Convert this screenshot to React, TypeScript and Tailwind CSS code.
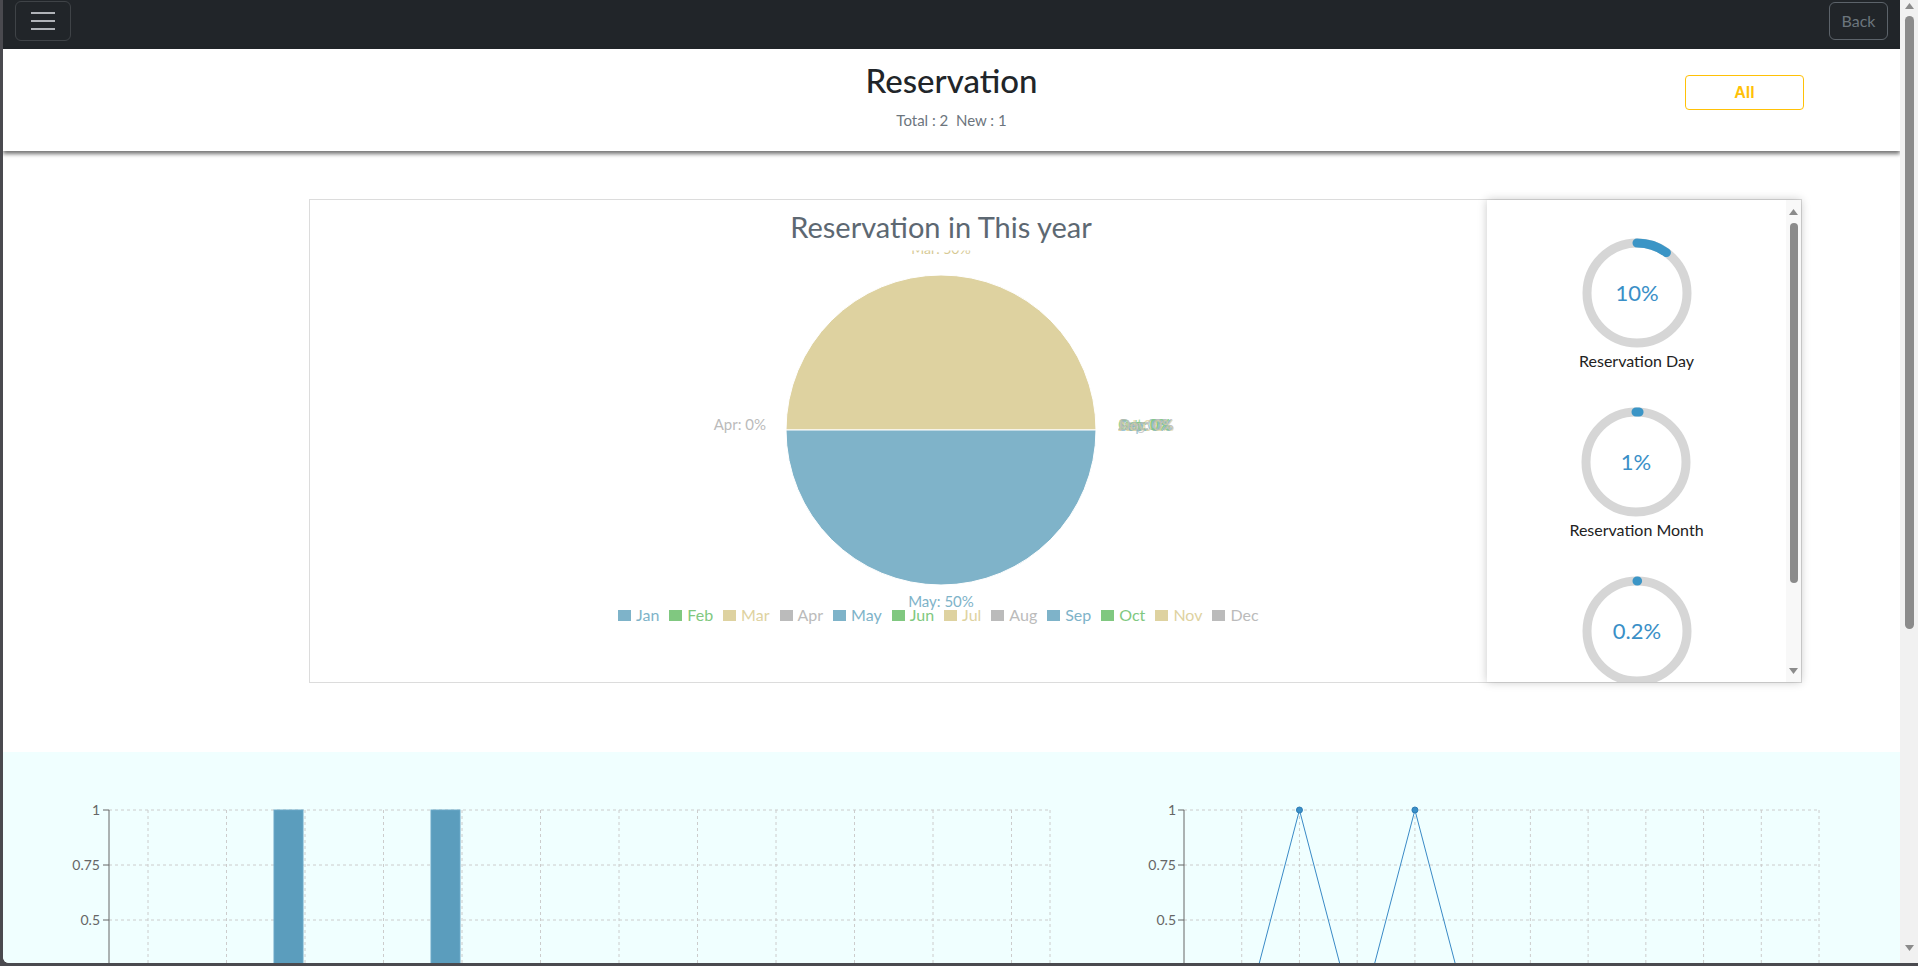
import React from "react";

const MONTHS = ["Jan", "Feb", "Mar", "Apr", "May", "Jun", "Jul", "Aug", "Sep", "Oct", "Nov", "Dec"];
const SLICE_COLORS = ["#7eb3c9", "#80c880", "#ded2a0", "#bbbbbb"];

// values per month for the two bottom charts
const monthly = [0, 0, 1, 0, 1, 0, 0, 0, 0, 0, 0, 0];
const yTicks = [1, 0.75, 0.5, 0.25, 0];
const yOf = (v: number) => 278 - 220 * v;

function Gauge({ percent, label }: { percent: number; label: string }) {
  const r = 50;
  const circ = 2 * Math.PI * r;
  return (
    <div className="flex flex-col items-center">
      <svg width="110" height="110" viewBox="0 0 110 110">
        <circle cx="55" cy="55" r={r} fill="none" stroke="#d6d6d6" strokeWidth="9" />
        <circle
          cx="55"
          cy="55"
          r={r}
          fill="none"
          stroke="#3b95c6"
          strokeWidth="9"
          strokeLinecap="round"
          strokeDasharray={`${(circ * percent) / 100} ${circ}`}
          transform="rotate(-90 55 55)"
        />
        <text x="55" y="63" textAnchor="middle" fontSize="22" fill="#3a8fc7" fontFamily="Lato, sans-serif">
          {percent}%
        </text>
      </svg>
      <div className="mt-[3px] text-[16px] leading-[20px] text-[#222]">{label}</div>
    </div>
  );
}

function PieChart() {
  const cx = 631;
  return (
    <svg width="1177" height="407" className="overflow-visible" style={{ fontFamily: "Lato, sans-serif" }}>
      {/* label half hidden by the title box */}
      <text x={cx} y="54" textAnchor="middle" fontSize="14" fill="#d6c993">
        Mar: 50%
      </text>
      <rect x={cx - 155} y="0" width="310" height="50.5" fill="#ffffff" />
      <text x={cx} y="38" textAnchor="middle" fontSize="29" fill="#5d6872">
        Reservation in This year
      </text>

      <path d={`M ${cx - 155} 230 A 155 155 0 0 1 ${cx + 155} 230 Z`} fill="#ded2a0" stroke="#ffffff" strokeWidth="1" />
      <path d={`M ${cx - 155} 230 A 155 155 0 0 0 ${cx + 155} 230 Z`} fill="#7fb3c9" stroke="#ffffff" strokeWidth="1" />

      <text x={cx - 175} y="230" textAnchor="end" fontSize="15" fill="#bbbbbb">
        Apr: 0%
      </text>
      {["Jan", "Feb", "Jun", "Jul", "Aug", "Sep", "Oct", "Nov", "Dec"].map((m, i) => (
        <text
          key={m}
          x={cx + 177 + (i % 3) * 0.6}
          y={230 + (i % 2) * 0.5}
          fontSize="15"
          fill={SLICE_COLORS[MONTHS.indexOf(m) % 4]}
          opacity="0.75"
        >
          {m}: 0%
        </text>
      ))}

      <text x={cx} y="407" textAnchor="middle" fontSize="15" fill="#7eb3c9">
        May: 50%
      </text>
    </svg>
  );
}

function BarChart() {
  const xs = MONTHS.map((_, k) => 145 + 78.5 * k);
  return (
    <svg width="1103" height="300" style={{ fontFamily: "Lato, sans-serif" }}>
      {yTicks.map((t) => (
        <line key={t} x1="106" x2="1047" y1={yOf(t)} y2={yOf(t)} stroke="#cccccc" strokeDasharray="3 3" />
      ))}
      {[...xs, 1047].map((x) => (
        <line key={x} x1={x} x2={x} y1="58" y2="278" stroke="#cccccc" strokeDasharray="3 3" />
      ))}
      {monthly.map((v, k) =>
        v > 0 ? (
          <rect key={k} x={106 + 78.5 * k + 8} y={yOf(v)} width="29" height={220 * v} fill="#5b9dbd" stroke="#6aa8c8" />
        ) : null
      )}
      <line x1="106" x2="106" y1="58" y2="300" stroke="#666666" />
      {yTicks.map((t) => (
        <g key={t}>
          <line x1="100" x2="106" y1={yOf(t)} y2={yOf(t)} stroke="#666666" />
          <text x="97" y={yOf(t) + 5} textAnchor="end" fontSize="14" fill="#666666">
            {t}
          </text>
        </g>
      ))}
    </svg>
  );
}

function LineChart() {
  const xs = MONTHS.map((_, i) => 78 + 57.73 * i);
  const pts = monthly.map((v, i) => `${xs[i]},${yOf(v)}`).join(" ");
  return (
    <svg width="794" height="300" style={{ fontFamily: "Lato, sans-serif" }}>
      {yTicks.map((t) => (
        <line key={t} x1="78" x2="713" y1={yOf(t)} y2={yOf(t)} stroke="#cccccc" strokeDasharray="3 3" />
      ))}
      {xs.slice(1).map((x) => (
        <line key={x} x1={x} x2={x} y1="58" y2="278" stroke="#cccccc" strokeDasharray="3 3" />
      ))}
      <polyline points={pts} fill="none" stroke="#3a8ac6" strokeWidth="1" />
      {monthly.map((v, i) => (
        <circle key={i} cx={xs[i]} cy={yOf(v)} r="3" fill="#3a8fc8" stroke="#2f7db5" />
      ))}
      <line x1="78" x2="78" y1="58" y2="300" stroke="#666666" />
      {yTicks.map((t) => (
        <g key={t}>
          <line x1="72" x2="78" y1={yOf(t)} y2={yOf(t)} stroke="#666666" />
          <text x="70" y={yOf(t) + 5} textAnchor="end" fontSize="14" fill="#666666">
            {t}
          </text>
        </g>
      ))}
    </svg>
  );
}

function Arrow({ up }: { up?: boolean }) {
  return (
    <svg width="9" height="6" viewBox="0 0 9 6">
      <polygon points={up ? "0,6 4.5,0 9,6" : "0,0 4.5,6 9,0"} fill="#8b8b8b" />
    </svg>
  );
}

export default function App() {
  return (
    <div className="h-screen w-full overflow-hidden bg-[#4a4a4f] pl-[3px] pb-[3px] font-['Lato',sans-serif]">
      <div className="flex h-full overflow-hidden rounded-bl-[6px] bg-white">
        {/* page */}
        <div className="flex min-w-0 flex-1 flex-col overflow-hidden">
          {/* Navbar */}
          <nav className="flex h-[49px] shrink-0 items-start justify-between bg-[#212529] px-[12px] pt-[1px]">
            <button className="flex h-[40px] w-[56px] flex-col items-center justify-center gap-[6px] rounded-[6px] border border-[#3f4347]">
              <span className="h-[2px] w-[24px] bg-[#b0b3b8]" />
              <span className="h-[2px] w-[24px] bg-[#b0b3b8]" />
              <span className="h-[2px] w-[24px] bg-[#b0b3b8]" />
            </button>
            <button className="mt-[1px] h-[38px] w-[59px] rounded-[6px] border border-[#5c636a] text-[16px] text-[#6c757d]">
              Back
            </button>
          </nav>

          {/* Header */}
          <header className="relative z-10 grid h-[102px] shrink-0 grid-cols-[1fr_auto_1fr] bg-white shadow-[0_3px_4px_rgba(0,0,0,0.55)]">
            <div />
            <div className="flex flex-col items-center pt-[12px]">
              <h2 className="text-[33px] leading-[1.2] font-medium text-[#212529]">Reservation</h2>
              <p className="mt-[10px] text-[15px] leading-[18px] text-[#6c757d]">
                Total : 2&nbsp;&nbsp;New : 1
              </p>
            </div>
            <div className="flex items-start justify-end pr-[96px] pt-[26px]">
              <button className="h-[35px] w-[119px] rounded-[4px] border border-[#ffc107] font-['Liberation_Sans',sans-serif] text-[16px] font-bold text-[#ffc107]">
                All
              </button>
            </div>
          </header>

          {/* Chart card */}
          <section className="shrink-0 pt-[48px] pb-[69px]">
            <div className="ml-[306px] flex h-[484px] w-[1493px] border border-[#dcdcdc]">
              <div className="flex w-[1177px] flex-col">
                <PieChart />
                <div className="flex items-center gap-[10px] pl-[308px] text-[16px] leading-[16px]">
                  {MONTHS.map((m, i) => (
                    <div key={m} className="flex items-center">
                      <span className="h-[11px] w-[13px]" style={{ backgroundColor: SLICE_COLORS[i % 4] }} />
                      <span className="ml-[5px]" style={{ color: SLICE_COLORS[i % 4] }}>
                        {m}
                      </span>
                    </div>
                  ))}
                </div>
              </div>

              {/* Side gauges */}
              <div className="flex w-[314px] overflow-hidden bg-white shadow-[0_0_9px_rgba(0,0,0,0.22)]">
                <div className="flex w-[299px] flex-col items-center gap-[36px] pt-[38px]">
                  <Gauge percent={10} label="Reservation Day" />
                  <Gauge percent={1} label="Reservation Month" />
                  <Gauge percent={0.2} label="Reservation Year" />
                </div>
                <div className="flex w-[15px] flex-col items-center bg-[#f8f8f8] pt-[9px] pb-[8px]">
                  <Arrow up />
                  <div className="mt-[8px] h-[360px] w-[8px] rounded-full bg-[#8b8b8b]" />
                  <div className="flex-1" />
                  <Arrow />
                </div>
              </div>
            </div>
          </section>

          {/* Bottom charts */}
          <section className="flex h-[300px] shrink-0 bg-[#f0ffff]">
            <BarChart />
            <LineChart />
          </section>
        </div>

        {/* Page scrollbar */}
        <div className="flex w-[18px] shrink-0 flex-col items-center bg-[#f1f1f1] pt-[3px] pb-[12px]">
          <Arrow up />
          <div className="mt-[7px] h-[613px] w-[9px] rounded-full bg-[#8b8b8b]" />
          <div className="flex-1" />
          <Arrow />
        </div>
      </div>
    </div>
  );
}
